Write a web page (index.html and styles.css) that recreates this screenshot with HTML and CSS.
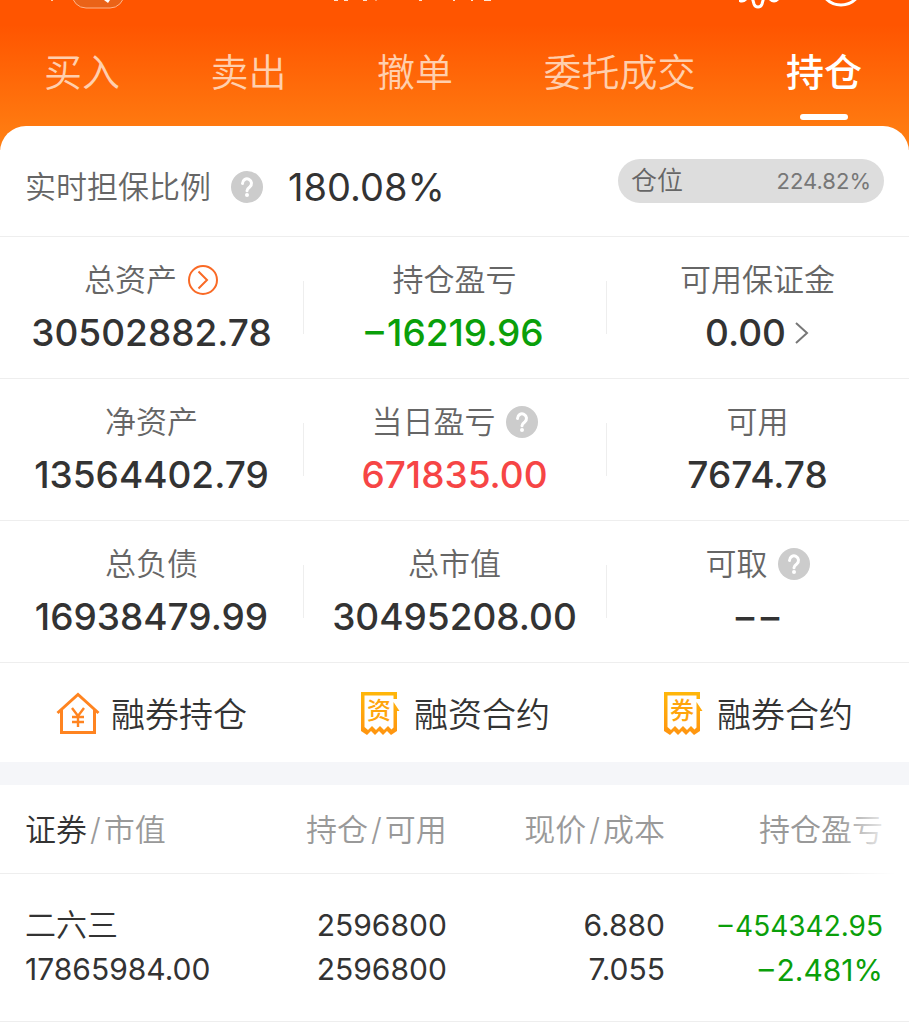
FILE: index.html
```html
<!DOCTYPE html>
<html lang="zh-CN">
<head>
    <meta charset="UTF-8">
    <meta name="viewport" content="width=device-width, initial-scale=1.0">
    <title>持仓</title>
    <link rel="stylesheet" href="styles.css">
</head>
<body>
    <header class="header">
        <div class="topbar">
            <svg width="130" height="10" viewBox="0 0 130 10" aria-hidden="true">
                <path d="M51 0h2" stroke="#ffc9a8" stroke-width="2"/>
                <path d="M72 -8v2a14 14 0 0 0 14 14h24a14 14 0 0 0 14-14v-2z" fill="#ea6318" stroke="#ffb58a" stroke-width="1"/>
                <path d="M104 0h6l-2 3z" fill="#fff"/>
            </svg>
            <svg class="topbar-title" width="170" height="10" viewBox="0 0 170 10" aria-hidden="true">
                <path d="M4 0h4M14 0h4M33 0h4M89 0h3M123 0h2M141 0h2M154 0h7" stroke="#ffe3d2" stroke-width="2"/>
                <path d="M45 0h2" stroke="#ff9c68" stroke-width="2"/>
            </svg>
            <svg class="topbar-tools" width="130" height="10" viewBox="0 0 130 10" aria-hidden="true">
                <path d="M-1 -1q4 4 8 0M31 -1q4 4 8 0M13 -3l2 7q1 3 4 3t4-3l2-7" fill="none" stroke="#fff" stroke-width="3"/>
                <circle cx="102" cy="-16" r="21" fill="none" stroke="#fff" stroke-width="3"/>
            </svg>
        </div>
        <nav class="tabs">
            <button class="tab">买入</button>
            <button class="tab">卖出</button>
            <button class="tab">撤单</button>
            <button class="tab">委托成交</button>
            <button class="tab active">持仓</button>
        </nav>
    </header>

    <main class="panel">
        <section class="ratio">
            <span class="label">实时担保比例</span>
            <button class="help" aria-label="实时担保比例说明">
                <svg width="32" height="32" viewBox="0 0 32 32"><circle cx="16" cy="16" r="16" fill="#ccc"/><path d="M11.5 12.5a4.5 4.5 0 1 1 7.2 3.5c-1.700 1.200-2.700 1.800-2.700 3.700" fill="none" stroke="#fff" stroke-width="3" stroke-linecap="round"/><circle cx="16" cy="24" r="2" fill="#fff"/></svg>
            </button>
            <span class="ratio-value">180.08%</span>
            <div class="position">
                <span>仓位</span>
                <span class="position-value">224.82%</span>
            </div>
        </section>

        <section class="stats">
            <div class="stat">
                <div class="label">总资产
                    <button class="help" aria-label="总资产详情">
                        <svg width="32" height="32" viewBox="0 0 32 32" fill="none" stroke="#f96a26" stroke-width="2"><circle cx="16" cy="16" r="14"/><path d="M11.500 7.500L20 16l-8.500 8.500"/></svg>
                    </button>
                </div>
                <div class="value">30502882.78</div>
            </div>
            <div class="stat">
                <div class="label">持仓盈亏</div>
                <div class="value down">–&hairsp;16219.96</div>
            </div>
            <div class="stat">
                <div class="label">可用保证金</div>
                <div class="value">0.00
                    <svg width="16" height="24" viewBox="0 0 16 24"><path d="M2 2l11 10L2 22" fill="none" stroke="#777" stroke-width="2"/></svg>
                </div>
            </div>
        </section>
        <section class="stats">
            <div class="stat">
                <div class="label">净资产</div>
                <div class="value">13564402.79</div>
            </div>
            <div class="stat">
                <div class="label">当日盈亏
                    <button class="help" aria-label="当日盈亏说明">
                        <svg width="32" height="32" viewBox="0 0 32 32"><circle cx="16" cy="16" r="16" fill="#ccc"/><path d="M11.5 12.5a4.5 4.5 0 1 1 7.2 3.5c-1.700 1.200-2.700 1.800-2.700 3.700" fill="none" stroke="#fff" stroke-width="3" stroke-linecap="round"/><circle cx="16" cy="24" r="2" fill="#fff"/></svg>
                    </button>
                </div>
                <div class="value up">671835.00</div>
            </div>
            <div class="stat">
                <div class="label">可用</div>
                <div class="value">7674.78</div>
            </div>
        </section>
        <section class="stats">
            <div class="stat">
                <div class="label">总负债</div>
                <div class="value">16938479.99</div>
            </div>
            <div class="stat">
                <div class="label">总市值</div>
                <div class="value">30495208.00</div>
            </div>
            <div class="stat">
                <div class="label">可取
                    <button class="help" aria-label="可取说明">
                        <svg width="32" height="32" viewBox="0 0 32 32"><circle cx="16" cy="16" r="16" fill="#ccc"/><path d="M11.5 12.5a4.5 4.5 0 1 1 7.2 3.5c-1.700 1.200-2.700 1.800-2.700 3.700" fill="none" stroke="#fff" stroke-width="3" stroke-linecap="round"/><circle cx="16" cy="24" r="2" fill="#fff"/></svg>
                    </button>
                </div>
                <div class="value">–&thinsp;–</div>
            </div>
        </section>

        <section class="links">
            <button class="link">
                <svg width="44" height="44" viewBox="0 0 44 44" fill="none" stroke="#ff8420">
                    <path d="M1.500 22L22 3.500 42.500 22M5.500 19v22.500h33V19" stroke-width="3"/>
                    <path d="M16 17l6 8 6-8M22 25v11M16 26h12M16 31h12" stroke-width="2.400"/>
                </svg>
                融券持仓
            </button>
            <button class="link">
                <svg width="44" height="44" viewBox="0 0 44 44">
                    <defs><linearGradient id="gold" x1="0" y1="0" x2="0" y2="1"><stop offset="0" stop-color="#ffb70a"/><stop offset="1" stop-color="#ff9410"/></linearGradient></defs>
                    <path d="M2 1h36v7h-3.500V4.500H5.500V36l3.500 3 4-4 4 4 4-4 4 4 4-4 3.500 3.500 2-2V11l6 9h-2.500v20l-6 4-4-4-4 4-4-4-4 4-4-4-4 4-6-4z" fill="url(#gold)"/>
                    <text x="20" y="28" class="icon-text">资</text>
                </svg>
                融资合约
            </button>
            <button class="link">
                <svg width="44" height="44" viewBox="0 0 44 44">
                    <path d="M2 1h36v7h-3.500V4.500H5.500V36l3.500 3 4-4 4 4 4-4 4 4 4-4 3.500 3.500 2-2V11l6 9h-2.500v20l-6 4-4-4-4 4-4-4-4 4-4-4-4 4-6-4z" fill="url(#gold)"/>
                    <text x="20" y="28" class="icon-text">券</text>
                </svg>
                融券合约
            </button>
        </section>

        <section class="holdings">
            <table>
                <thead>
                    <tr>
                        <th><b>证券</b><i>/</i>市值</th>
                        <th>持仓<i>/</i>可用</th>
                        <th>现价<i>/</i>成本</th>
                        <th>持仓盈亏</th>
                    </tr>
                </thead>
                <tbody>
                    <tr>
                        <td><span class="name">二六三</span><br>17865984.00</td>
                        <td>2596800<br>2596800</td>
                        <td>6.880<br>7.055</td>
                        <td class="down"><span class="profit">–&hairsp;454342.95</span><br>–&hairsp;2.481%</td>
                    </tr>
                </tbody>
            </table>
        </section>
    </main>
</body>
</html>
```
FILE: styles.css
```css
*{
    box-sizing: border-box;
    padding: 0;
    margin: 0;
}

body{
    font-family: Inter, "Noto Sans CJK SC", sans-serif;
    font-size: 31px;
    color: #333;
    background-color: white;
}

button{
    border: none;
    background: none;
    font: inherit;
    color: inherit;
    cursor: pointer;
}

svg{
    display: block;
    flex-shrink: 0;
}

.header{
    background: linear-gradient(#ff5500 25px, #ff7e12 140px);
    padding-bottom: 30px;
}

.topbar{
    display: flex;
    height: 28px;
    padding-right: 40px;
}

.topbar-title{
    margin-left: 200px;
}

.topbar-tools{
    margin-left: auto;
}

.tabs{
    display: flex;
    justify-content: space-between;
    padding: 0 47px 0 44px;
}

.tab{
    display: flex;
    flex-direction: column;
    align-items: center;
    height: 92px;
    font-size: 38px;
    font-weight: 350;
    line-height: 88px;
    color: #ffcfae;
}

.tab.active{
    color: white;
    font-weight: 500;
}

.tab.active::after{
    content: "";
    width: 48px;
    height: 6px;
    margin-top: -2px;
    border-radius: 3px;
    background-color: white;
    flex-shrink: 0;
}

.panel{
    margin-top: -24px;
    background-color: white;
    border-radius: 26px 26px 0 0;
}

.ratio{
    display: flex;
    align-items: center;
    height: 111px;
    padding: 12px 25px 0 25px;
    border-bottom: 1px solid #eee;
}

.ratio .help{
    margin: 0 25px 0 20px;
}

.label{
    display: flex;
    align-items: center;
    justify-content: center;
    gap: 10px;
    font-weight: 350;
    line-height: 46px;
    color: #666;
}

.ratio-value{
    font-size: 38px;
}

.position{
    display: flex;
    align-items: center;
    justify-content: space-between;
    width: 266px;
    height: 44px;
    margin: 0 0 12px auto;
    padding: 0 13px;
    border-radius: 22px;
    background-color: #ddd;
    font-size: 26px;
    font-weight: 350;
    line-height: 42px;
    color: #666;
}

.position-value{
    font-size: 22px;
    font-weight: 400;
    color: #777;
}

.stats{
    display: flex;
    border-bottom: 1px solid #eee;
}

.stat{
    flex: 1;
    position: relative;
    padding: 20px 0 19px;
    text-align: center;
}

.stat + .stat::before{
    content: "";
    position: absolute;
    left: 0;
    top: 44px;
    width: 1px;
    height: 53px;
    background-color: #eee;
}

.value{
    display: flex;
    align-items: center;
    justify-content: center;
    gap: 8px;
    margin-top: 4px;
    font-size: 37px;
    font-weight: 500;
    line-height: 52px;
}

.down{
    color: #0a9f0a;
}

.up{
    color: #f64545;
}

.links{
    display: flex;
    border-bottom: 23px solid #f5f6f9;
}

.link{
    flex: 1;
    display: flex;
    align-items: center;
    justify-content: center;
    gap: 11px;
    height: 99px;
    font-size: 34px;
    font-weight: 350;
}

.icon-text{
    font-size: 24px;
    font-weight: 500;
    text-anchor: middle;
    fill: #ffa50c;
}

.holdings{
    position: relative;
}

.holdings::after{
    content: "";
    position: absolute;
    right: 0;
    top: 0;
    width: 70px;
    height: 90px;
    background: linear-gradient(to right, rgba(255, 255, 255, 0), white 80%);
}

table{
    width: 100%;
    border-collapse: collapse;
    table-layout: fixed;
}

th, td{
    text-align: right;
    font-weight: 400;
    border-bottom: 1px solid #eee;
}

th{
    height: 88px;
    padding-bottom: 2px;
    font-weight: 350;
    color: #999;
}

th b{
    font-weight: 350;
    color: #333;
}

th i{
    margin: 0 3px;
    font-style: normal;
}

td{
    padding: 29px 0;
    font-size: 30px;
    line-height: 44px;
}

th:first-child, td:first-child{
    padding-left: 25px;
    text-align: left;
}

th:nth-child(2){
    width: 22%;
}

th:nth-child(3){
    width: 24%;
}

th:last-child, td:last-child{
    width: 244px;
    padding-right: 26px;
}

.name{
    font-size: 31px;
    font-weight: 350;
}

.profit{
    font-size: 28px;
}
```
